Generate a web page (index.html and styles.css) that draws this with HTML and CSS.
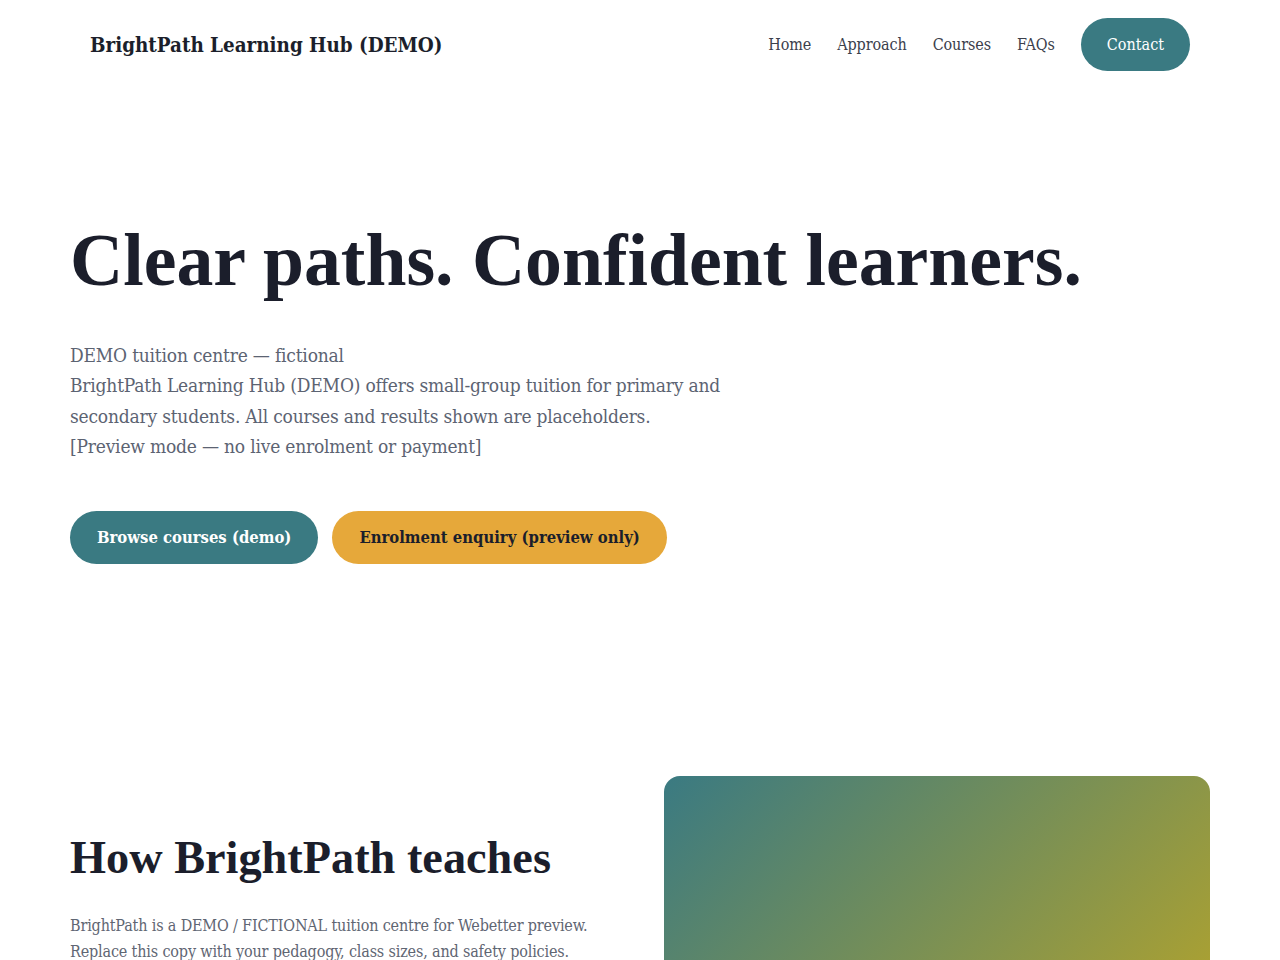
FILE: index.html
```html
<!DOCTYPE html>
<html lang="en">
<head>
<meta charset="utf-8">
<title>BrightPath Learning Hub (DEMO)</title>
<link rel="stylesheet" href="styles.css">
</head>
<body>
<header class="site-header">
  <a class="logo" href="#">BrightPath Learning Hub (DEMO)</a>
  <nav class="nav">
    <a class="nav-link" href="#">Home</a>
    <a class="nav-link" href="#">Approach</a>
    <a class="nav-link" href="#">Courses</a>
    <a class="nav-link" href="#">FAQs</a>
    <a class="nav-cta" href="#">Contact</a>
  </nav>
</header>
<main>
  <section class="hero">
    <h1 class="hero-title">Clear paths. Confident learners.</h1>
    <p class="hero-text">DEMO tuition centre — fictional<br>BrightPath Learning Hub (DEMO) offers small-group tuition for primary and secondary students. All courses and results shown are placeholders.<br>[Preview mode — no live enrolment or payment]</p>
    <div class="hero-actions">
      <a class="btn btn-primary" href="#">Browse courses (demo)</a>
      <a class="btn btn-accent" href="#">Enrolment enquiry (preview only)</a>
    </div>
  </section>
  <section class="approach">
    <div class="approach-copy">
      <h2 class="section-title">How BrightPath teaches</h2>
      <p class="section-text">BrightPath is a DEMO / FICTIONAL tuition centre for Webetter preview. Replace this copy with your pedagogy, class sizes, and safety policies.</p>
    </div>
    <div class="approach-visual"></div>
  </section>
</main>
</body>
</html>
```
FILE: styles.css
```css
* { box-sizing: border-box; }
html, body { margin: 0; padding: 0; background: #ffffff; }
body {
  font-family: "DejaVu Serif Condensed", "DejaVu Serif", serif;
  font-stretch: condensed;
  color: #1c1f2b;
}
a { text-decoration: none; color: inherit; }

.site-header {
  display: flex;
  align-items: center;
  justify-content: space-between;
  padding: 18px 90px;
}
.logo {
  font-weight: 700;
  font-size: 20.4px;
  color: #1c1f2b;
}
.nav {
  display: flex;
  align-items: center;
  gap: 26px;
}
.nav-link {
  font-size: 16px;
  letter-spacing: -0.1px;
  color: #3b404c;
}
.nav-cta {
  font-size: 16px;
  line-height: 21px;
  padding: 16px 26px;
  border-radius: 999px;
  background: #3a7a82;
  color: #ffffff;
}

.hero {
  padding: 131px 70px 0;
}
.hero-title {
  font-family: "Liberation Serif", serif;
  font-stretch: normal;
  font-weight: 700;
  font-size: 73.7px;
  line-height: 1.1;
  margin: 0;
  color: #1b1e2b;
}
.hero-text {
  margin: 39px 0 0;
  max-width: 690px;
  font-size: 19px;
  line-height: 30.4px;
  letter-spacing: -0.2px;
  color: #5c6372;
}
.hero-actions {
  display: flex;
  gap: 14px;
  margin-top: 49px;
}
.btn {
  display: inline-block;
  font-weight: 700;
  font-size: 16.5px;
  line-height: 21px;
  padding: 16px 27px;
  border-radius: 999px;
}
.btn-primary { background: #3a7a82; color: #ffffff; }
.btn-accent { background: #e6a83a; color: #1b1e2b; }

.approach {
  display: grid;
  grid-template-columns: 1fr 1fr;
  gap: 48px;
  padding: 212px 70px 80px;
}
.approach-copy {
  padding-top: 55px;
}
.section-title {
  font-family: "Liberation Serif", serif;
  font-stretch: normal;
  font-weight: 700;
  font-size: 46.3px;
  line-height: 1.15;
  margin: 0;
  color: #1b1e2b;
}
.section-text {
  margin: 29px 0 0;
  font-size: 16px;
  line-height: 26px;
  letter-spacing: -0.16px;
  color: #5f6673;
}
.approach-visual {
  min-height: 400px;
  border-radius: 16px;
  background: linear-gradient(135deg, #3a7a82 0%, #c8ab1d 100%);
}
```
